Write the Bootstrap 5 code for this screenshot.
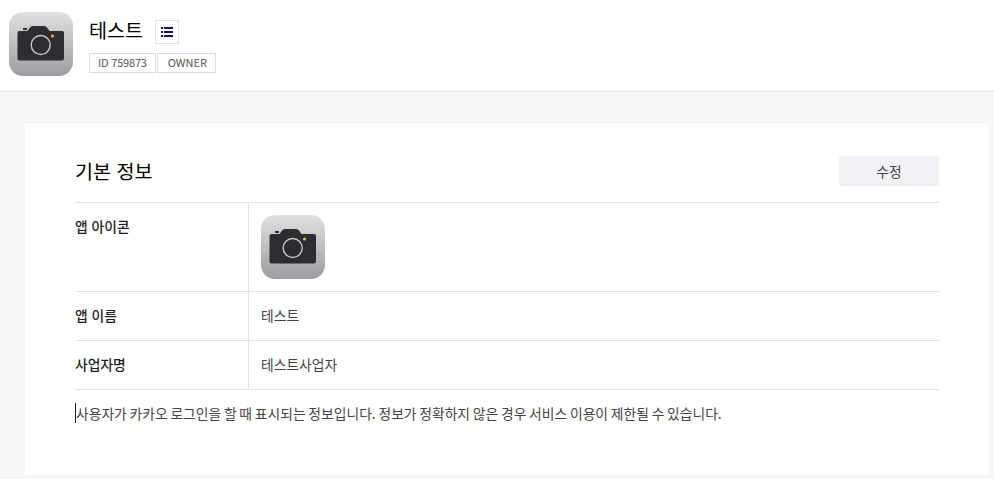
<!DOCTYPE html>
<html lang="ko">
<head>
  <meta charset="UTF-8">
  <title>기본 정보</title>
  <link href="https://cdn.jsdelivr.net/npm/bootstrap@5.3.0/dist/css/bootstrap.min.css" rel="stylesheet">
  <style>
    body {
      background-color: #f6f7f7;
      font-family: "Noto Sans CJK KR", "Noto Sans", sans-serif;
      font-size: 13.8px;
      color: #333;
      overflow: hidden;
    }

    .app-top {
      height: 92px;
      background-color: #fff;
      border-bottom: 1px solid #e2e2e2;
      padding: 12px 9px 0;
      gap: 16px;
    }

    .app-logo {
      width: 64px;
      height: 64px;
      display: block;
      flex-shrink: 0;
    }

    .app-name {
      font-size: 19.6px;
      line-height: 24px;
      font-weight: 400;
      color: #000;
      margin: 0;
    }

    .name-row {
      height: 26px;
      margin-top: 6px;
      gap: 12px;
    }

    .list-toggle {
      width: 24px;
      height: 24px;
      margin-top: 2px;
      padding: 0;
      background-color: #fff;
      border: 1px solid #e2e2e2;
      border-radius: 0;
    }

    .tag-row {
      margin-top: 9px;
      gap: 1px;
    }

    .id-tag {
      height: 20px;
      line-height: 16px;
      padding: 0 8px;
      font-size: 11px;
      letter-spacing: -0.2px;
      color: #555;
      border: 1px solid #dcdcdc;
    }

    .id-tag + .id-tag {
      padding: 0 8px 0 10px;
      letter-spacing: 0;
    }

    .info-panel {
      margin: 32px 5px 0 25px;
      height: 350px;
      padding: 32px 50px 0;
      background-color: #fff;
    }

    .panel-title {
      font-size: 19.6px;
      line-height: 30px;
      font-weight: 400;
      color: #000;
      margin: 0;
    }

    .panel-head {
      height: 46px;
    }

    .edit-btn {
      width: 100px;
      height: 30px;
      padding: 0;
      font-size: 13.8px;
      color: #444;
      background-color: #f1f2f7;
      border: 0;
      border-radius: 0;
    }

    .info-row {
      border-top: 1px solid #e2e2e2;
    }

    .info-row:last-of-type {
      height: 50px;
      border-bottom: 1px solid #e2e2e2;
    }

    .row-head {
      width: 174px;
      flex-shrink: 0;
      font-weight: 500;
      color: #1e1e1e;
      padding-top: 13px;
      border-right: 1px solid #e2e2e2;
    }

    .row-body {
      padding: 13px 12px;
      color: #444;
    }

    .row-text {
      height: 49px;
    }

    .row-icon .row-body {
      padding: 12px;
    }

    .row-icon {
      height: 89px;
    }

    .help-note {
      margin: 13px 0 0;
      line-height: 20px;
      word-spacing: -1.1px;
      color: #444;
      border-left: 1px solid #1a1a4a;
      width: fit-content;
    }
  </style>
</head>
<body>

<!-- Top -->
<div class="app-top d-flex">
  <svg class="app-logo" viewBox="0 0 64 64">
    <defs>
      <linearGradient id="logoFill" x1="0" y1="0" x2="0" y2="1">
        <stop offset="0" stop-color="#e0e0e2"/>
        <stop offset="1" stop-color="#9d9da2"/>
      </linearGradient>
    </defs>
    <rect width="64" height="64" rx="14" fill="url(#logoFill)"/>
    <path d="M8.5 21a2 2 0 0 1 2-2h8l2.500-3.500q1-1.500 3-1.500h11q2 0 3 1.500l2.500 3.500h12.500a2 2 0 0 1 2 2v25.500a2 2 0 0 1-2 2h-42.500a2 2 0 0 1-2-2z" fill="#2c2c31"/>
    <rect x="14" y="16" width="4" height="2" fill="#2c2c31"/>
    <circle cx="31.700" cy="33" r="9.500" fill="none" stroke="#c6c6c8" stroke-width="1.400"/>
    <circle cx="43.500" cy="24" r="1.500" fill="#f5c242"/>
  </svg>
  <div>
    <div class="name-row d-flex align-items-start">
      <h1 class="app-name">테스트</h1>
      <button type="button" class="list-toggle btn d-flex align-items-center justify-content-center">
        <svg width="12" height="10" viewBox="0 0 12 10" fill="#0a1464">
          <rect x="0" y="0" width="2" height="2"/><rect x="3" y="0" width="9" height="2"/>
          <rect x="0" y="4" width="2" height="2"/><rect x="3" y="4" width="9" height="2"/>
          <rect x="0" y="8" width="2" height="2"/><rect x="3" y="8" width="9" height="2"/>
        </svg>
      </button>
    </div>
    <div class="tag-row d-flex">
      <span class="id-tag">ID 759873</span>
      <span class="id-tag">OWNER</span>
    </div>
  </div>
</div>

<!-- Panel -->
<div class="info-panel">
  <div class="panel-head d-flex justify-content-between align-items-start">
    <h2 class="panel-title">기본 정보</h2>
    <button type="button" class="edit-btn btn">수정</button>
  </div>
  <div class="info-row row-icon d-flex">
    <div class="row-head">앱 아이콘</div>
    <div class="row-body">
      <svg class="app-logo" viewBox="0 0 64 64">
        <rect width="64" height="64" rx="14" fill="url(#logoFill)"/>
        <path d="M8.5 21a2 2 0 0 1 2-2h8l2.500-3.500q1-1.500 3-1.500h11q2 0 3 1.500l2.500 3.500h12.500a2 2 0 0 1 2 2v25.500a2 2 0 0 1-2 2h-42.500a2 2 0 0 1-2-2z" fill="#2c2c31"/>
        <rect x="14" y="16" width="4" height="2" fill="#2c2c31"/>
        <circle cx="31.700" cy="33" r="9.500" fill="none" stroke="#c6c6c8" stroke-width="1.400"/>
        <circle cx="43.500" cy="24" r="1.500" fill="#f5c242"/>
      </svg>
    </div>
  </div>
  <div class="info-row row-text d-flex">
    <div class="row-head">앱 이름</div>
    <div class="row-body">테스트</div>
  </div>
  <div class="info-row row-text d-flex">
    <div class="row-head">사업자명</div>
    <div class="row-body">테스트사업자</div>
  </div>
  <p class="help-note">사용자가 카카오 로그인을 할 때 표시되는 정보입니다. 정보가 정확하지 않은 경우 서비스 이용이 제한될 수 있습니다.</p>
</div>

<script src="https://cdn.jsdelivr.net/npm/bootstrap@5.3.0/dist/js/bootstrap.bundle.min.js"></script>
</body>
</html>
